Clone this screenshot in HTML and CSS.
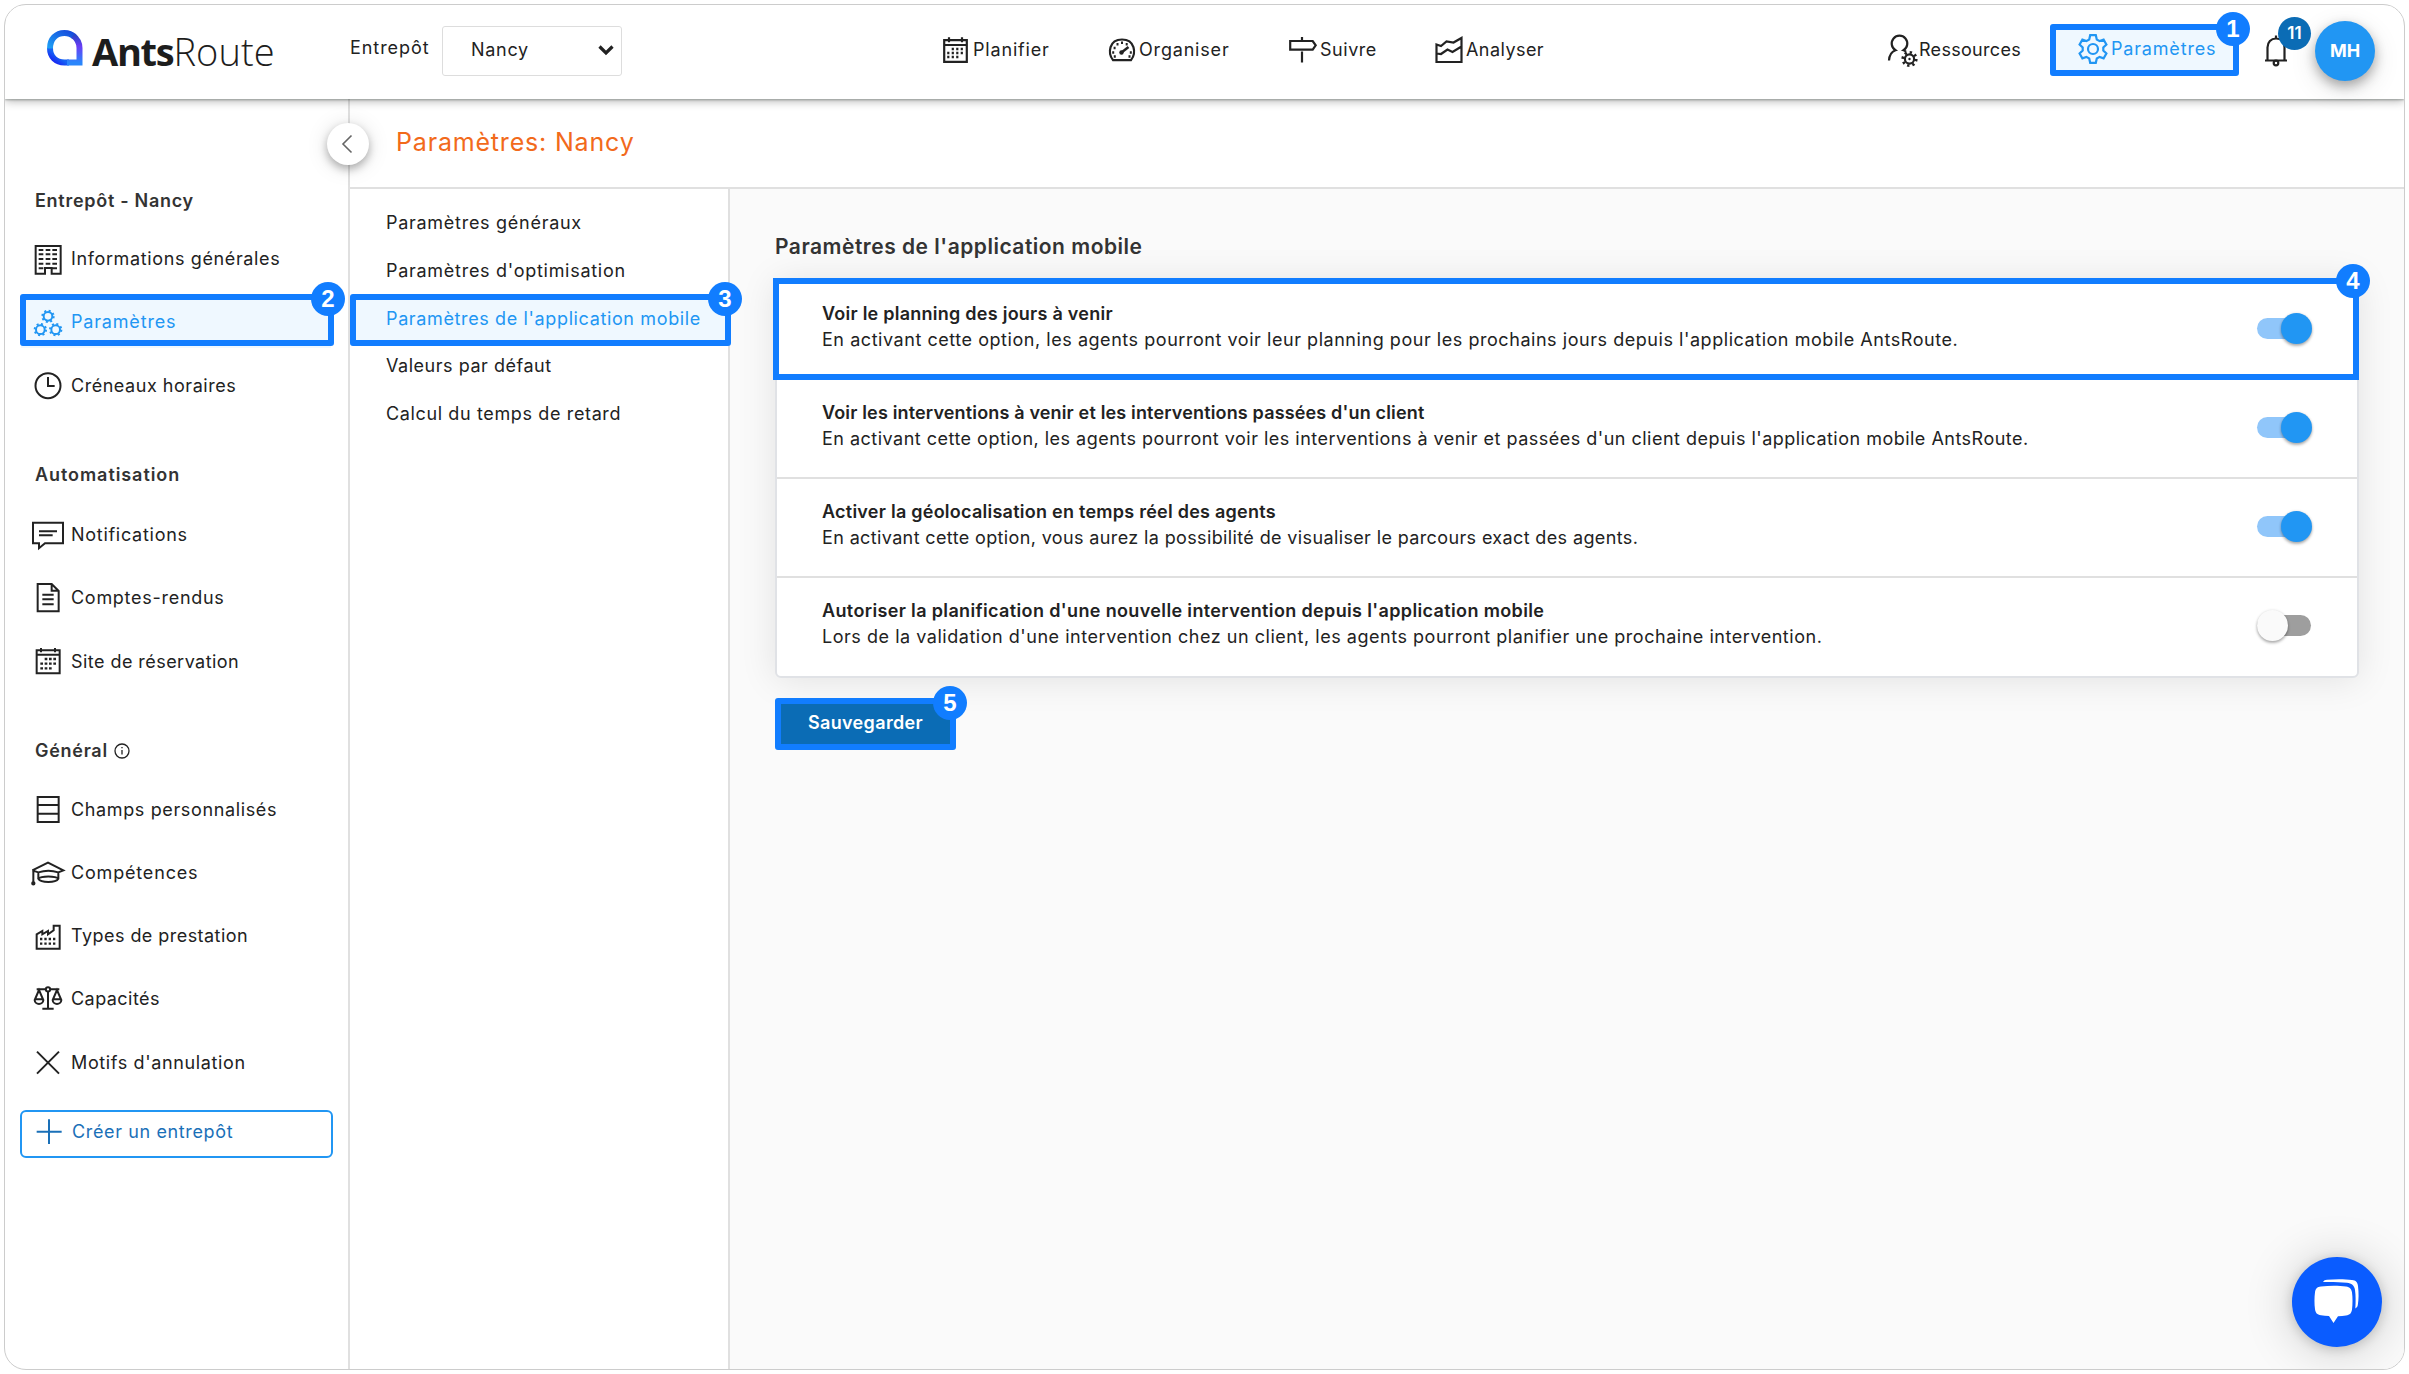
FILE: index.html
```html
<!DOCTYPE html>
<html lang="fr">
<head>
<meta charset="utf-8">
<title>AntsRoute - Paramètres</title>
<link rel="stylesheet" href="styles.css">
</head>
<body>
<div class="app">
  <header class="topbar">
    <a class="logo">
      <svg class="logo-mark" viewBox="0 0 36 36">
        <defs>
          <linearGradient id="lg1" x1="0" y1="1" x2="1" y2="0"><stop offset="0" stop-color="#1a12f0"/><stop offset=".45" stop-color="#1565f5"/><stop offset="1" stop-color="#2b3fd0"/></linearGradient>
          <linearGradient id="lg2" x1="0" y1="0" x2="0" y2="1"><stop offset="0" stop-color="#2a45c8"/><stop offset=".4" stop-color="#6a3cf5"/><stop offset="1" stop-color="#2a86fb"/></linearGradient>
          <linearGradient id="lg3" x1="0" y1="1" x2="1" y2="0"><stop offset="0" stop-color="#1ea0f5"/><stop offset="1" stop-color="#1549dc"/></linearGradient>
        </defs>
        <path d="M3 18C3 27 9 32.500 17.500 32.500H22" fill="none" stroke="url(#lg1)" stroke-width="6"/>
        <path d="M3 18.500C3 9 9 3 17.500 3 22 3 25 4.500 27.500 7" fill="none" stroke="url(#lg3)" stroke-width="6"/>
        <path d="M26 5.500C30.500 9 32.500 13 32.500 18V32.500H20" fill="none" stroke="url(#lg2)" stroke-width="6"/>
      </svg>
      <span class="logo-bold">Ants</span><span class="logo-light">Route</span>
    </a>
    <label class="depot-label t9">Entrepôt</label>
    <div class="depot-select"><span class="t7">Nancy</span>
      <svg width="16" height="10" viewBox="0 0 16 10"><path d="M1.500 1.500 8 8l6.500-6.500" fill="none" stroke="#222" stroke-width="3.200"/></svg>
    </div>
    <a class="nav-item t8"><svg class="ic" viewBox="0 0 28 30"><path d="M2.200 5.200h22.600v21.600H2.200zM2.200 10h22.600M7 2.300v5M20 2.300v5"/><path class="dots" d="M9.700 14h2.200m2.300 0h2.200m2.300 0h2.200M5.200 18h2.200m2.300 0h2.200m2.300 0h2.200m2.300 0h2.200M5.200 22h2.200m2.300 0h2.200m2.300 0h2.200"/></svg>Planifier</a>
    <a class="nav-item t8"><svg class="ic" viewBox="0 0 28 30"><path d="M5 25.200C-.5 18 1 4.500 14 4.500S28.500 18 23 25.200z"/><circle cx="13.500" cy="17.500" r="2.200" fill="#222" stroke="none"/><path d="m13.500 17.500 7-5.500" stroke-width="2.500"/><path class="dots" d="M13 7.800h2M8.500 9.300h2M17.700 9.300h2M5.600 13h2M4.200 17.500h2M21.800 17.500h2M5.800 21.500h2M20.500 21.500h2"/></svg>Organiser</a>
    <a class="nav-item t5"><svg class="ic" viewBox="0 0 28 30"><path d="M1.200 6h22.500l3 4.300-3 4.400H1.200zM13 2v4M13 16.500v11"/></svg>Suivre</a>
    <a class="nav-item t4"><svg class="ic" viewBox="0 0 28 30"><path d="M1.500 9.500 6 11l5.500-4.500 7 1L26.500 3v24H1.500zM1.500 18.500 6 19l6.500-4.500 5 2.500 9-5.500"/></svg>Analyser</a>
    <a class="nav-item nav-res t3"><svg class="ic ic-wide" viewBox="0 0 31 34"><path d="M1 26.500c.3-5.500 3-9 6.500-10.300a7.800 7.800 0 1 1 8 0c1.500.5 2 1 2.500 1.500"/><circle cx="21.500" cy="25" r="4.600"/><circle cx="21.500" cy="25" r="6.700" stroke-width="2.800" stroke-dasharray="2.300 2.960"/><circle cx="21.500" cy="25" r="1.200" fill="#222" stroke="none"/></svg>Ressources</a>
    <a class="nav-item nav-active t8"><svg class="ic ic-gear" viewBox="0 0 30 30"><path d="M12.200 1.200h5.600l1 4.300 2.800 1.600 4-1.400 2.800 4.800-3.100 2.900v3.200l3.100 2.900-2.800 4.800-4-1.400-2.800 1.600-1 4.300h-5.600l-1-4.300-2.800-1.600-4 1.400-2.800-4.800 3.100-2.900v-3.200L1.600 10.500l2.800-4.800 4 1.400 2.800-1.600z"/><circle cx="15" cy="15" r="5"/></svg>Paramètres<span class="step">1</span></a>
    <div class="bell"><svg class="ic" viewBox="0 0 24 32"><path d="M1 26.500h22M3.500 26.500V13.500C3.500 8 7 4.500 12 4.500s8.500 3.500 8.500 9v13M12 1.500v3"/><circle cx="12" cy="29" r="2.300"/></svg><span class="count">11</span></div>
    <div class="avatar">MH</div>
  </header>

  <div class="main">
    <aside class="sidebar">
      <h3 class="t7">Entrepôt - Nancy</h3>
      <a class="item t6"><svg viewBox="100 195 90 90"><path d="M108 201h75v83h-27v-17h-20v17h-28zM117 213h14m7 0h14m6 0h14M117 226h14m7 0h14m6 0h14M117 240h14m7 0h14m6 0h14M117 254h14m7 0h14m6 0h14M117 268h14m27 0h14"/></svg>Informations générales</a>
      <a class="item active t8"><svg viewBox="100 383 90 90"><g id="cog"><circle cx="145" cy="411" r="13"/><circle cx="145" cy="411" r="17" stroke-width="6" stroke-dasharray="6 7.350"/></g><use href="#cog" x="-23" y="40"/><use href="#cog" x="23" y="40"/></svg>Paramètres<span class="ring"></span><span class="step">2</span></a>
      <a class="item t5"><svg viewBox="100 572 90 90"><circle cx="145" cy="616" r="37.500"/><path d="M145 590v27h20"/></svg>Créneaux horaires</a>
      <h3 class="t9">Automatisation</h3>
      <a class="item t7"><svg viewBox="100 63.500 90 90"><path d="M100 72h90v61h-54l-18 15v-15h-18zM118 97h54M118 109h41"/></svg>Notifications</a>
      <a class="item t7"><svg viewBox="100 253 90 90"><path d="M114 256h42l21 21v61h-63zM156 256v20h21M128 288h34M128 302h34M128 317h34"/></svg>Comptes-rendus</a>
      <a class="item t4"><svg viewBox="100 443 90 90"><path d="M111 453h69v69h-69zM111 466h69M124 446v13M166 446v13"/><path class="dots" d="M135 479h8m5 0h8m5 0h8M122 493h8m5 0h8m5 0h8m5 0h8M122 507h8m5 0h8m5 0h8"/></svg>Site de réservation</a>
      <h3 class="t7">Général <svg class="info" viewBox="0 0 16 16"><circle cx="8" cy="8" r="7"/><path d="M8 7v4.500M8 4v1.300"/></svg></h3>
      <a class="item short t6"><svg viewBox="100 893 90 90"><path d="M114 899h63v75h-63zM114 923h63M114 949h63"/></svg>Champs personnalisés</a>
      <a class="item t8"><svg viewBox="100 118 90 90"><path d="m98 155 47-23 46 23-15 6M98 155l18 6M116 180v-19c18-6 42-6 60 0v19c-8 13-52 13-60 0 8-9 52-9 60 0M101 157v38"/><circle cx="101" cy="194" r="3.500"/></svg>Compétences</a>
      <a class="item t4"><svg viewBox="100 308 90 90"><path d="M111 391v-43l17-10v10l17-10v10l17-12v-14h18v69z"/><path class="dots" d="M121 362h7m6 0h7m6 0h7m6 0h7M121 376h7m6 0h7m6 0h7m6 0h7"/></svg>Types de prestation</a>
      <a class="item t4"><svg viewBox="100 498 90 90"><path d="M111 514h27M152 514h27M145 521v50M128 572h34M118 516l-12 28h24zM172 516l-12 28h24zM105 545c0 17 26 17 26 0M159 545c0 17 26 17 26 0"/><circle cx="145" cy="514" r="6.500"/></svg>Capacités</a>
      <a class="item t6"><svg viewBox="100 688 90 90"><path d="m112 699 66 66M178 699l-66 66"/></svg>Motifs d'annulation</a>
      <a class="create t6"><svg viewBox="100 898 90 90"><path d="M108 942h75M145 905v74"/></svg>Créer un entrepôt</a>
    </aside>

    <section class="page">
      <div class="page-head">
        <button class="collapse"><svg width="12" height="20" viewBox="0 0 12 20"><path d="m10.500 1.500-8.500 8.500 8.500 8.500" fill="none" stroke="#666" stroke-width="1.600"/></svg></button>
        <h1>Paramètres: Nancy</h1>
      </div>
      <div class="page-body">
        <nav class="submenu">
          <a class="t7">Paramètres généraux</a>
          <a class="t7">Paramètres d'optimisation</a>
          <a class="sub-active t6">Paramètres de l'application mobile<span class="step">3</span></a>
          <a class="t5">Valeurs par défaut</a>
          <a class="t6">Calcul du temps de retard</a>
        </nav>
        <div class="content">
          <h2>Paramètres de l'application mobile</h2>
          <div class="card">
            <div class="row"><div><b>Voir le planning des jours à venir</b><p>En activant cette option, les agents pourront voir leur planning pour les prochains jours depuis l'application mobile AntsRoute.</p></div><i class="toggle on"></i><span class="ring"></span><span class="step">4</span></div>
            <div class="row"><div><b>Voir les interventions à venir et les interventions passées d'un client</b><p>En activant cette option, les agents pourront voir les interventions à venir et passées d'un client depuis l'application mobile AntsRoute.</p></div><i class="toggle on"></i></div>
            <div class="row"><div><b>Activer la géolocalisation en temps réel des agents</b><p>En activant cette option, vous aurez la possibilité de visualiser le parcours exact des agents.</p></div><i class="toggle on"></i></div>
            <div class="row"><div><b>Autoriser la planification d'une nouvelle intervention depuis l'application mobile</b><p>Lors de la validation d'une intervention chez un client, les agents pourront planifier une prochaine intervention.</p></div><i class="toggle"></i></div>
          </div>
          <button class="save">Sauvegarder<span class="step">5</span></button>
        </div>
      </div>
    </section>
  </div>
  <div class="chat"><svg width="48" height="46" viewBox="0 0 48 46"><path fill="#fff" d="M8 7.500c8-1 18-1 25 0 4 .5 5.500 2.500 6 6 .7 5 .7 12 0 17-.5 3.500-2 5.500-6 6-2.500.3-5 .5-8 .7L20.500 44l-4.500-7c-3-.1-5.500-.3-8-.7-4-.5-5.500-2.500-6-6-.7-5-.7-12 0-17 .5-3.500 2-5.500 6-5.800z"/><path fill="#fff" d="M10 3c1-1.800 2-2 4-2.200 8-.8 18-.8 25 .2 4 .5 5.500 2 6 6 .8 7 .8 13-.2 19-.3 1.800-1 2.500-2.500 3.500.5-7 .5-13-.3-18.500C41.300 6.500 38.500 4.300 34 3.800 27 3 18 2.800 10 3z"/></svg></div>
</div>
</body>
</html>
```
FILE: styles.css
```css
* { box-sizing: border-box; }
body {
  margin: 0;
  padding: 4px;
  background: #fff;
  color: #222;
  font-family: Inter, sans-serif;
  font-size: 18px;
  line-height: 26px;
}
h1, h2, h3, p { margin: 0; }
svg { overflow: visible; flex: none; }
a, b, p, h1, h2, h3 { white-space: nowrap; }

.t3 { letter-spacing: .3px; }
.t4 { letter-spacing: .45px; }
.t5 { letter-spacing: .53px; }
.t6 { letter-spacing: .63px; }
.t7 { letter-spacing: .72px; }
.t8 { letter-spacing: .82px; }
.t9 { letter-spacing: .93px; }

.app {
  position: relative;
  display: flex;
  flex-direction: column;
  width: 2401px;
  height: 1366px;
  border: 1px solid #ccc;
  border-radius: 22px;
  overflow: hidden;
}

/* top bar */
.topbar {
  position: relative;
  z-index: 2;
  display: grid;
  grid-template-columns: 303px 92px 500px 166px 181px 146px 453px 162px 215px 50px 60px;
  align-items: center;
  flex: none;
  height: 94px;
  padding: 0 0 5px 42px;
  background: #fff;
  box-shadow: 0 1px 2px rgba(0, 20, 10, .28), 0 2px 9px rgba(0, 0, 0, .3);
}
.logo { display: flex; align-items: center; font: 38px/40px "Open Sans", sans-serif; color: #1d1d1d; }
.logo-mark { width: 36px; height: 36px; margin: -3px 9px 0 0; }
.logo-bold { font-weight: 700; letter-spacing: -1.300px; padding-top: 3px; }
.logo-light { font-weight: 300; padding-top: 3px; }
.logo-light { letter-spacing: .1px; }
.depot-label { padding-bottom: 3px; }
.depot-select {
  display: flex;
  align-items: center;
  justify-content: space-between;
  width: 180px;
  height: 50px;
  margin-top: 2px;
  padding: 0 7px 2px 28px;
  border: 1.500px solid #ddd;
  border-radius: 3px;
}
.nav-item { display: flex; align-items: center; gap: 3px; }
.ic, .sidebar svg { fill: none; stroke: #222; stroke-width: 2.200; }
.ic { width: 28px; height: 30px; }
.ic-wide { width: 31px; height: 34px; margin: 3px -3px 0 0; }
.dots { stroke-width: 2.400; }
.nav-active {
  position: relative;
  width: 189px;
  height: 52px;
  margin-top: 1px;
  padding: 0 0 2px 22px;
  border: 6px solid #117dff;
  border-radius: 3px;
  background: #eff8ff;
  color: #2196f3;
}
.ic-gear { width: 30px; stroke: #2196f3; }
.step {
  position: absolute;
  top: -18px;
  right: -17px;
  width: 34px;
  height: 34px;
  border-radius: 50%;
  background: #117dff;
  color: #fff;
  font: 700 24px/34px "Liberation Sans", sans-serif;
  letter-spacing: 0;
  text-align: center;
}
.bell { position: relative; width: 24px; height: 32px; margin-left: -1px; justify-self: start; }
.bell .ic { width: 24px; height: 32px; display: block; }
.count {
  position: absolute;
  left: 14px;
  top: -17px;
  width: 33px;
  height: 33px;
  border-radius: 50%;
  background: #0b6cb5;
  color: #fff;
  font-weight: 600;
  font-size: 17px;
  line-height: 32px;
  text-align: center;
}
.avatar {
  width: 60px;
  height: 60px;
  margin-top: 3px;
  border-radius: 50%;
  background: #2196f3;
  color: #fff;
  font-weight: 700;
  line-height: 60px;
  text-align: center;
  box-shadow: 0 5px 12px rgba(0, 0, 0, .3), 0 8px 28px rgba(0, 0, 0, .12);
}

/* sidebar */
.main { display: flex; flex: 1; }
.sidebar { width: 345px; padding: 87px 17px 0 16px; border-right: 2px solid #e0e0e0; }
.sidebar h3 {
  display: flex;
  align-items: center;
  height: 30px;
  margin: 43px 0 13px 14px;
  font-size: 18px;
  font-weight: 600;
  color: #333;
}
.sidebar h3:first-child { margin: 0 0 11.500px 14px; }
.item { position: relative; display: flex; align-items: center; gap: 8px; height: 63.300px; padding-left: 12px; }
.item.short { height: 61.800px; }
.item svg, .create svg { width: 30px; height: 30px; stroke-width: 6; }
.item .dots { stroke-width: 7; }
.sidebar .info { width: 16px; height: 16px; margin-left: 6px; stroke-width: 1.300; }
.item.active { color: #2196f3; background: linear-gradient(#eff8ff, #eff8ff) 0 5px / 312px 52px no-repeat; }
.item.active svg { stroke: #2196f3; }
.ring { position: absolute; border: 6px solid #117dff; }
.item .ring { left: -1px; top: 3px; width: 314px; height: 52px; border-radius: 3px; }
.item .step { top: -9px; right: -14px; }
.create {
  display: flex;
  align-items: center;
  gap: 8px;
  width: 313px;
  height: 48px;
  margin: 16px 0 0 -1px;
  padding: 0 0 4px 12px;
  border: 2px solid #2196f3;
  border-radius: 6px;
  color: #1a70b8;
}
.sidebar .create svg { stroke: #1a70b8; }

/* page */
.page { display: flex; flex-direction: column; flex: 1; }
.page-head {
  position: relative;
  display: flex;
  align-items: center;
  height: 90px;
  padding: 0 0 3px 46px;
  border-bottom: 2px solid #e0e0e0;
}
.page-head h1 { font-size: 25px; font-weight: 400; letter-spacing: .82px; color: #f26a1b; }
.collapse {
  position: absolute;
  left: -23px;
  top: 24px;
  display: flex;
  align-items: center;
  justify-content: center;
  width: 42px;
  height: 42px;
  padding: 0 2px 0 0;
  border: 0;
  border-radius: 50%;
  background: #fff;
  box-shadow: 0 4px 8px rgba(0, 0, 0, .28), 0 2px 22px rgba(0, 0, 0, .13);
}
.page-body { display: flex; flex: 1; }
.submenu { width: 380px; padding-top: 10px; border-right: 2px solid #e0e0e0; }
.submenu a { position: relative; display: flex; align-items: center; height: 48.300px; padding-left: 36px; }
.submenu .sub-active {
  width: 381px;
  height: 52px;
  margin: -2px 0 -4px;
  padding: 0 0 1px 30px;
  border: 6px solid #117dff;
  border-radius: 3px;
  background: #eff8ff;
  color: #2196f3;
}

/* content */
.content { flex: 1; padding: 43px 45px 0 45px; background: #fafafa; }
.content h2 { height: 30px; line-height: 30px; font-size: 21px; font-weight: 600; letter-spacing: .5px; color: #333; }
.card {
  width: 1584px;
  margin-top: 17px;
  background: #fff;
  border: 2px solid #e0e2e6;
  border-radius: 6px;
  box-shadow: 0 2px 36px rgba(0, 0, 0, .1);
}
.row {
  position: relative;
  display: flex;
  justify-content: space-between;
  height: 99px;
  padding: 19.500px 46px 0 45px;
  border-bottom: 2px solid #e0e0e0;
}
.row:last-child { border: 0; height: 98px; }
.row b, .row p { display: block; line-height: 26.700px; }
.row b { font-weight: 600; letter-spacing: .25px; }
.row p { letter-spacing: .545px; }
.row:nth-child(2) b { letter-spacing: .16px; }
.row:nth-child(2) p { letter-spacing: .485px; }
.row:nth-child(3) p { letter-spacing: .37px; }
.row:nth-child(4) b { letter-spacing: .36px; }
.row:nth-child(4) p { letter-spacing: .53px; }
.row .ring { left: -4px; top: -3px; width: 1586px; height: 102px; }
.row .step { top: -17px; right: -13px; }
.toggle { position: relative; width: 54px; height: 21px; margin-top: 17px; border-radius: 11px; background: #9e9e9e; }
.toggle.on { background: #90c6fa; }
.toggle::after {
  content: "";
  position: absolute;
  left: 0;
  top: -5px;
  width: 31px;
  height: 31px;
  border-radius: 50%;
  background: #fafafa;
  box-shadow: 0 2px 3px rgba(0, 0, 0, .3), 0 0 3px rgba(0, 0, 0, .1);
}
.toggle.on::after { left: 24px; background: #2196f3; }
.save {
  position: relative;
  display: block;
  width: 181px;
  height: 52px;
  margin-top: 20px;
  padding: 0 0 3px;
  border: 6px solid #117dff;
  border-radius: 3px;
  background: #0b6cb5;
  color: #fff;
  font: 600 18px/26px Inter, sans-serif;
  letter-spacing: .35px;
}
.save .step { right: -17px; }

.chat {
  position: absolute;
  right: 22px;
  bottom: 22px;
  display: flex;
  align-items: center;
  justify-content: center;
  width: 90px;
  height: 90px;
  border-radius: 50%;
  background: #0a5cff;
  box-shadow: 0 2px 12px rgba(0, 0, 0, .18), 0 3px 50px rgba(0, 0, 0, .2);
}
```
